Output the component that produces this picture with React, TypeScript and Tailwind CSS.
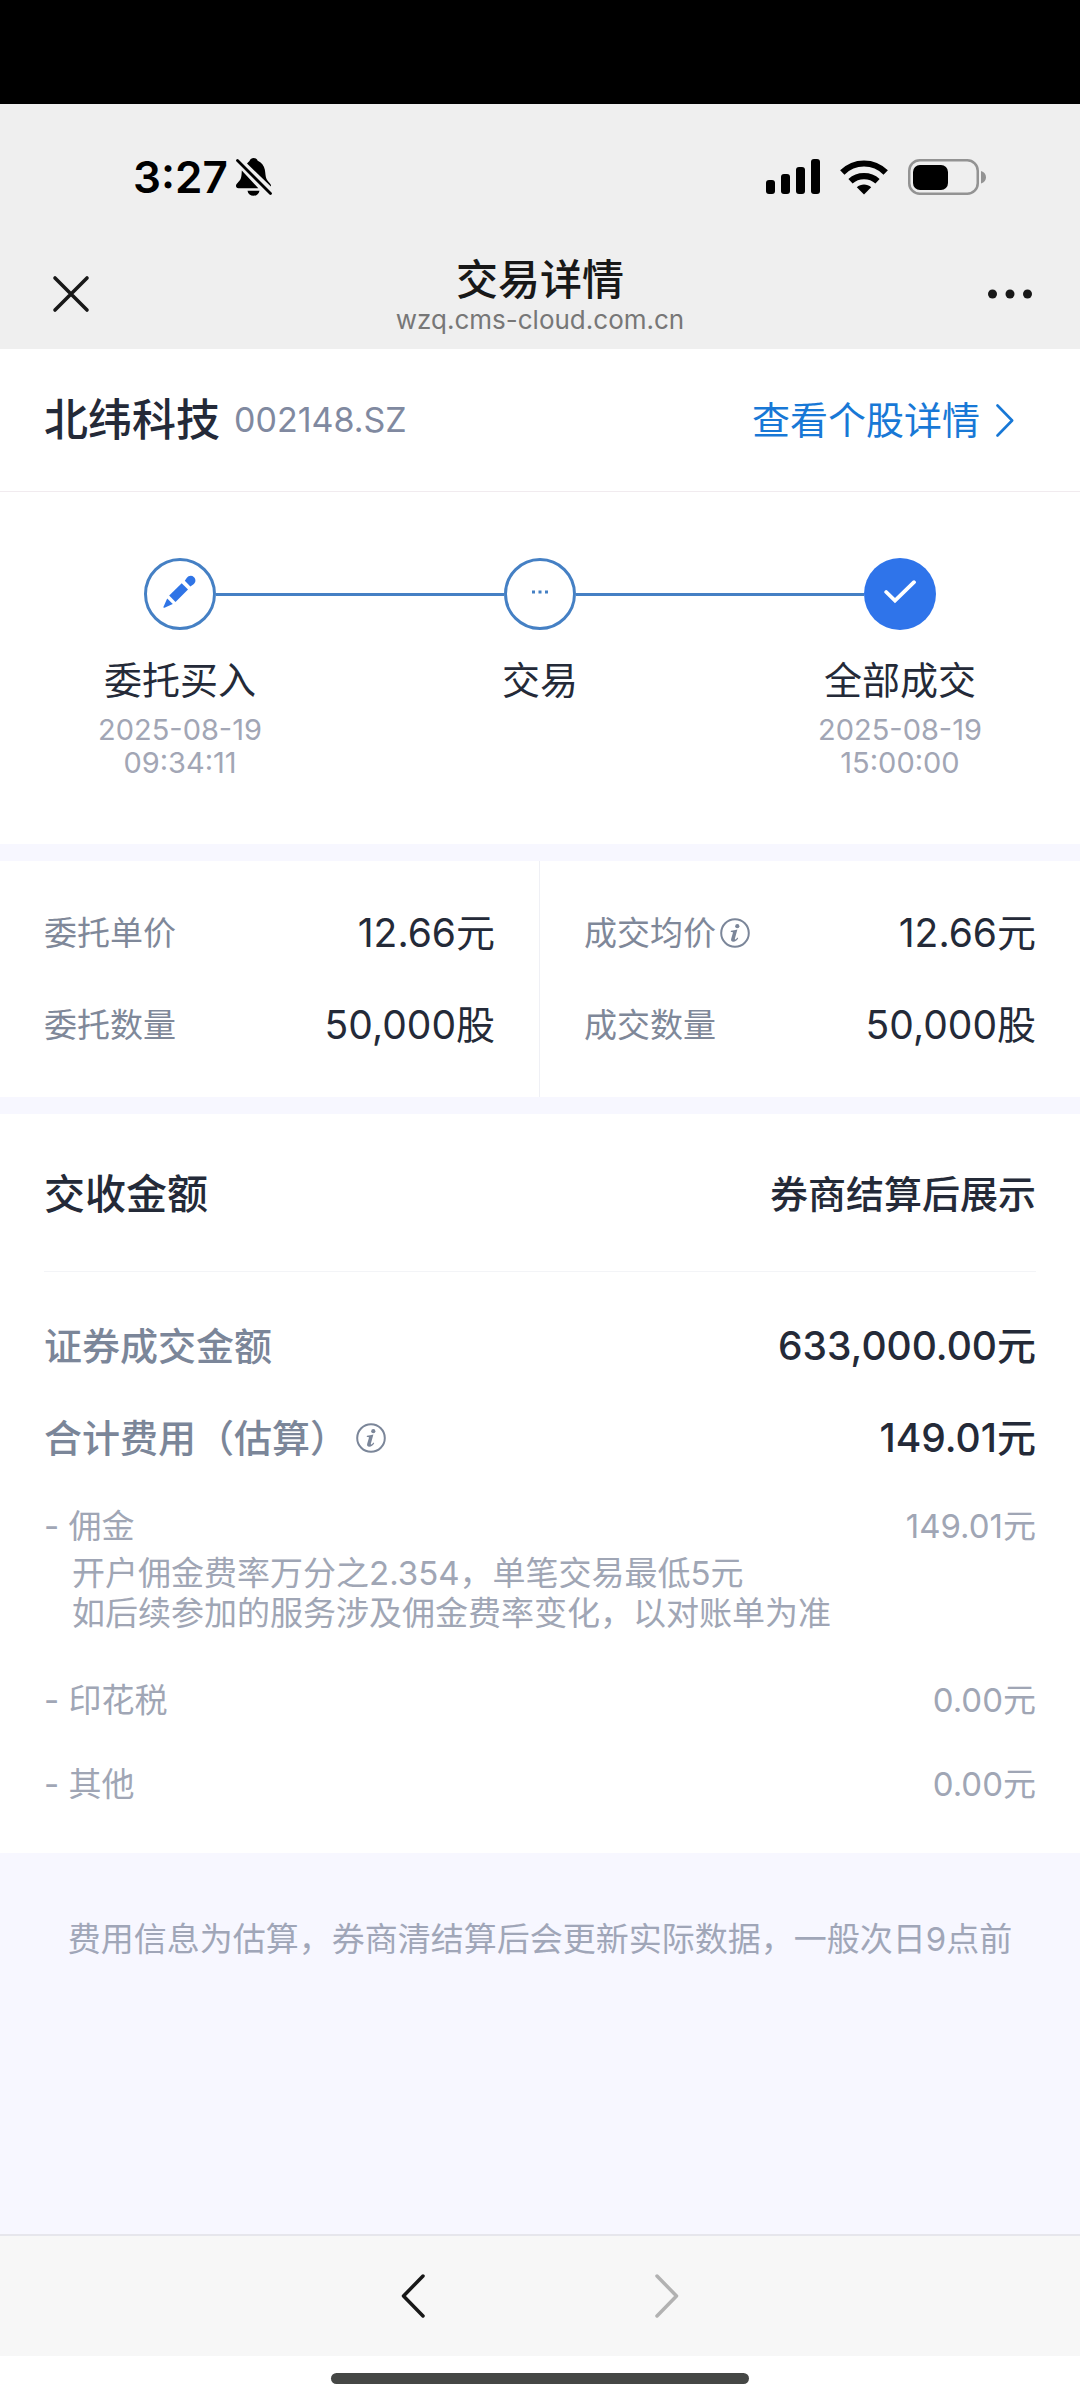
import type { ReactNode } from "react";

function BellOff() {
  return (
    <svg className="h-[38px] w-[36px]" viewBox="0 0 36 38" aria-hidden="true">
      <path
        d="M11 5.5C12.5 4 13.2 3.4 13.6 2.7 14.4 1 15.8 0 17.6 0s3.300 1 4.100 2.700C25.500 4.500 28 7.500 28.800 11.500c.7 4 .6 7 1.700 9.500.9 2 2.500 3 4 5.200.5.800.6 1.500.4 2.300zM5.800 12.500 22.300 30.200H2.500C.8 30.200 0 29 0 27.700c0-2.200 3.200-3.700 4.600-6.700C5.700 18.500 5.600 15.500 5.800 12.500zM11.500 32.700h12c-.5 3.200-3 5.100-6 5.100s-5.500-1.900-6-5.100z"
        fill="#000"
      />
      <path d="M1.500 2.500 34.500 35.500" stroke="#000" strokeWidth="2.800" strokeLinecap="round" />
    </svg>
  );
}

function Signal() {
  return (
    <svg className="h-9 w-[54px]" viewBox="0 0 54 36" aria-hidden="true">
      <rect x="0" y="21" width="9" height="14" rx="3" />
      <rect x="15" y="15" width="9" height="20" rx="3" />
      <rect x="30" y="8" width="9" height="27" rx="3" />
      <rect x="45" y="0" width="9" height="35" rx="3" />
    </svg>
  );
}

function Wifi() {
  return (
    <svg className="h-9 w-12" viewBox="0 0 48 36" aria-hidden="true">
      <path d="M24 35.500 16.800 28.200c4-3.500 10.400-3.500 14.400 0z" />
      <path d="M10.500 22.200C18 15.300 30 15.300 37.500 22.200" fill="none" stroke="#000" strokeWidth="6.200" />
      <path d="M2.300 13.500C14.500 1.500 33.500 1.500 45.700 13.500" fill="none" stroke="#000" strokeWidth="6.200" />
    </svg>
  );
}

function Battery() {
  return (
    <svg className="h-9 w-[78px]" viewBox="0 0 78 36" aria-hidden="true">
      <rect x="1.250" y="1.250" width="68.500" height="33.500" rx="10.500" fill="none" stroke="#939393" strokeWidth="2.500" />
      <rect x="5" y="6" width="35" height="25" rx="7" />
      <path d="M73 12c3.500 1 5 3.500 5 6.200s-1.500 5.200-5 6.200z" fill="#939393" />
    </svg>
  );
}

function InfoButton({ label }: { label: string }) {
  return (
    <button type="button" aria-label={label} className="shrink-0 text-[#7b8699]">
      <svg className="size-[30px]" viewBox="0 0 30 30" aria-hidden="true">
        <circle cx="15" cy="15" r="13.800" fill="none" stroke="currentColor" strokeWidth="2" />
        <circle cx="17.300" cy="8.200" r="2.100" fill="currentColor" />
        <path
          d="M11 12.800c2-.2 4.200-.6 6.400-1.200l-2.500 8.900c-.2.800 0 1.100.4 1 .8-.2 1.400-1 2-1.900l.9.600c-1.200 2.200-2.900 3.500-4.900 3.500-2 0-2.600-1.200-2.100-2.900l1.600-5.500c.2-.8-.1-1.200-.6-1.200h-1.500z"
          fill="currentColor"
        />
      </svg>
    </button>
  );
}

function Chevron({ flip = false, className }: { flip?: boolean; className: string }) {
  return (
    <svg className={className} viewBox="0 0 24 44" fill="none" stroke="currentColor" strokeWidth="3.500" strokeLinecap="round" strokeLinejoin="round" aria-hidden="true">
      <path d={flip ? "M22 2 2.500 22 22 42" : "M2 2 21.500 22 2 42"} />
    </svg>
  );
}

function Pencil() {
  return (
    <svg className="size-[34px]" viewBox="0 0 34 34" fill="#2f74e6" aria-hidden="true">
      <path d="M6.200 20.600 18.700 8.200l6.300 6.300L12.500 27z" />
      <path d="M4.200 23.500 9.800 29.100 1.500 32.700c-.8.300-1.300-.2-1-1z" />
      <path d="M21.800 5.800l1.900-2.800c2-2.600 5.200-2.800 7.300-.8s1.900 5.300-.8 7.300l-2.800 1.900z" />
    </svg>
  );
}

function Check() {
  return (
    <svg className="h-[24px] w-[32px]" viewBox="0 0 32 24" aria-hidden="true">
      <path d="M2.200 12 11 20.500 30 2.200" fill="none" stroke="#fff" strokeWidth="3.800" strokeLinejoin="miter" strokeLinecap="round" />
    </svg>
  );
}

type StepProps = {
  label: string;
  date?: string;
  time?: string;
  icon: ReactNode;
  filled?: boolean;
  before?: boolean;
  after?: boolean;
};

function Step({ label, date, time, icon, filled, before, after }: StepProps) {
  return (
    <li className="flex flex-col items-center text-center">
      <div className="flex w-full items-center">
        <span className={before ? "h-[3px] flex-1 bg-[#4580c4]" : "h-[3px] flex-1"} />
        <span
          className={
            filled
              ? "flex size-[72px] items-center justify-center rounded-full bg-[#2f74ea] pb-1"
              : "flex size-[72px] items-center justify-center rounded-full border-[3px] border-[#4580c4] bg-white pb-1"
          }
        >
          {icon}
        </span>
        <span className={after ? "h-[3px] flex-1 bg-[#4580c4]" : "h-[3px] flex-1"} />
      </div>
      <span className="mt-6 text-[38px] leading-[52px] text-[#242a38]">{label}</span>
      {date && (
        <time className="mt-[7px] flex flex-col text-[29px] leading-[33px] text-[#a2a6b5]">
          <span>{date}</span>
          <span>{time}</span>
        </time>
      )}
    </li>
  );
}

function Quote({ label, value, info }: { label: string; value: string; info?: boolean }) {
  return (
    <div className="flex items-center justify-between">
      <dt className="flex items-center gap-1 text-[33px] leading-[52px] text-[#7f8899]">
        {label}
        {info && <InfoButton label={label + "说明"} />}
      </dt>
      <dd className="text-[39px] leading-[52px] text-[#242a38]">{value}</dd>
    </div>
  );
}

function Amount({ label, value, info }: { label: string; value: string; info?: boolean }) {
  return (
    <div className="flex items-center justify-between font-medium">
      <dt className="flex items-center gap-2 text-[38px] leading-[52px] text-[#7b8699]">
        {label}
        {info && <InfoButton label="费用说明" />}
      </dt>
      <dd className="text-[39px] leading-[52px] text-[#242a38]">{value}</dd>
    </div>
  );
}

function Fee({ label, value, notes }: { label: string; value: string; notes?: string[] }) {
  return (
    <div className="grid grid-cols-[1fr_auto] text-[33px] leading-10 text-[#a0a6b5]">
      <dt>- {label}</dt>
      <dd>{value}</dd>
      {notes && (
        <dd className="col-span-2 mt-[7px] mb-[3px] pl-7">
          {notes.map((note) => (
            <p key={note}>{note}</p>
          ))}
        </dd>
      )}
    </div>
  );
}

export default function App() {
  return (
    <div lang="zh-CN" className="flex min-h-screen flex-col bg-white font-[Inter,'Noto_Sans_CJK_SC',sans-serif]">
      <div className="h-[104px] bg-black" />
      <header className="bg-[#efefef] pb-[15px]">
        <div className="flex items-center justify-between pt-[46px] pr-[94px] pl-[133px]">
          <div className="flex items-center gap-2">
            <span className="text-[44px] leading-[54px] font-semibold text-black">3:27</span>
            <BellOff />
          </div>
          <div className="flex items-center gap-5">
            <Signal />
            <Wifi />
            <Battery />
          </div>
        </div>
        <div className="mt-[50px] grid grid-cols-[1fr_auto_1fr] items-center">
          <button type="button" aria-label="关闭" className="ml-[52px] justify-self-start">
            <svg className="size-[38px]" viewBox="0 0 38 38" stroke="#181818" strokeWidth="3.600" strokeLinecap="round" aria-hidden="true">
              <path d="M3 3 35 35M35 3 3 35" />
            </svg>
          </button>
          <div className="text-center">
            <h1 className="text-[42px] leading-[52px] font-medium text-[#181818]">交易详情</h1>
            <p className="text-[26px] leading-7 text-[#777]">wzq.cms-cloud.com.cn</p>
          </div>
          <button type="button" aria-label="更多" className="mr-12 justify-self-end">
            <svg className="h-[38px] w-[44px]" viewBox="0 0 44 38" fill="#181818" aria-hidden="true">
              <circle cx="4.500" cy="19" r="4.500" />
              <circle cx="22" cy="19" r="4.500" />
              <circle cx="39.500" cy="19" r="4.500" />
            </svg>
          </button>
        </div>
      </header>

      <main className="flex flex-1 flex-col bg-[#f7f7ff]">
        <section className="bg-white">
          <div className="flex items-center justify-between border-b border-[#f1ebef] py-[42px] pr-[66px] pl-11">
            <h2 className="flex items-center gap-3.5 text-[44px] leading-[58px] font-medium text-[#242a38]">
              北纬科技
              <span className="text-[34px] font-normal text-[#8089a0]">002148.SZ</span>
            </h2>
            <a href="#stock" className="flex items-center gap-4 text-[38px] leading-[58px] text-[#1878d6]">
              查看个股详情
              <Chevron className="h-[33px] w-[18px]" />
            </a>
          </div>
          <ol className="grid grid-cols-3 pt-[66px] pb-[65px]">
            <Step label="委托买入" date="2025-08-19" time="09:34:11" icon={<Pencil />} after />
            <Step
              label="交易"
              before
              after
              icon={
                <svg className="h-1 w-4" viewBox="0 0 16 4" fill="#4580c4" aria-hidden="true">
                  <rect x="0" y="0.500" width="3" height="3" />
                  <rect x="6.500" y="0.500" width="3" height="3" />
                  <rect x="13" y="0.500" width="3" height="3" />
                </svg>
              }
            />
            <Step label="全部成交" date="2025-08-19" time="15:00:00" icon={<Check />} filled before />
          </ol>
        </section>

        <section className="mt-[17px] grid grid-cols-2 bg-white">
          <dl className="flex flex-col gap-10 border-r border-[#eff0f5] px-11 py-[46px]">
            <Quote label="委托单价" value="12.66元" />
            <Quote label="委托数量" value="50,000股" />
          </dl>
          <dl className="flex flex-col gap-10 px-11 py-[46px]">
            <Quote label="成交均价" value="12.66元" info />
            <Quote label="成交数量" value="50,000股" />
          </dl>
        </section>

        <section className="mt-[17px] bg-white px-11 pb-[49px]">
          <div className="flex items-center justify-between border-b border-[#f3f4f7] pt-[54px] pb-[51px] font-medium text-[#242a38]">
            <h3 className="text-[41px] leading-[52px]">交收金额</h3>
            <p className="text-[38px] leading-[52px]">券商结算后展示</p>
          </div>
          <dl className="flex flex-col pt-[48px]">
            <Amount label="证券成交金额" value="633,000.00元" />
            <div className="mt-10">
              <Amount label="合计费用（估算）" value="149.01元" info />
            </div>
            <div className="mt-[42px] flex flex-col gap-11">
              <Fee
                label="佣金"
                value="149.01元"
                notes={["开户佣金费率万分之2.354，单笔交易最低5元", "如后续参加的服务涉及佣金费率变化，以对账单为准"]}
              />
              <Fee label="印花税" value="0.00元" />
              <Fee label="其他" value="0.00元" />
            </div>
          </dl>
        </section>

        <p className="px-11 py-16 text-center text-[33px] leading-[44px] text-[#a0a6b8]">
          费用信息为估算，券商清结算后会更新实际数据，一般次日9点前
        </p>
      </main>

      <footer>
        <nav className="flex items-center justify-center gap-[230px] border-t-2 border-[#e6e6ec] bg-[#f7f7f7] py-[38px]">
          <button type="button" aria-label="后退" className="text-[#181818]">
            <Chevron flip className="h-11 w-6" />
          </button>
          <button type="button" aria-label="前进" disabled className="text-[#b2b2b2]">
            <Chevron className="h-11 w-6" />
          </button>
        </nav>
        <div className="flex justify-center bg-white pt-[17px] pb-4">
          <span className="h-[11px] w-[418px] rounded-full bg-[#454745]" />
        </div>
      </footer>
    </div>
  );
}
